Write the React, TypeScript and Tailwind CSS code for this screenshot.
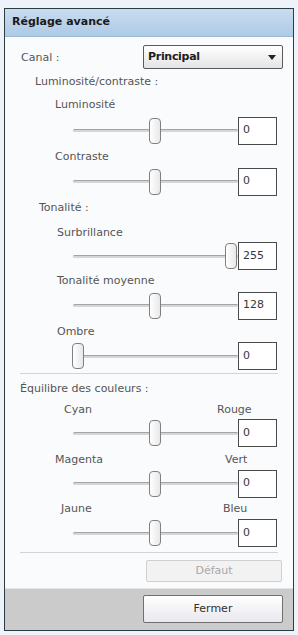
import React from "react";

const font = { fontFamily: '"DejaVu Sans", "Liberation Sans", sans-serif' };

function Label({ h, pl, children }: { h: number; pl: number; children: React.ReactNode }) {
  return (
    <div className="flex items-center text-[11px] text-[#555555]" style={{ height: h, paddingLeft: pl }}>
      <span className="relative top-[2px]">{children}</span>
    </div>
  );
}

function Pair({ h, left, right, lx, rx }: { h: number; left: string; right: string; lx: number; rx: number }) {
  return (
    <div className="relative flex items-center text-[11px] text-[#555555]" style={{ height: h }}>
      <span className="absolute top-[calc(50%-6px)]" style={{ left: lx }}>{left}</span>
      <span className="absolute top-[calc(50%-6px)]" style={{ left: rx }}>{right}</span>
    </div>
  );
}

function Slider({ h, pos, value }: { h: number; pos: number; value: string }) {
  const center = 78 + pos * (231 - 78);
  const left = center - 6 - 73;
  return (
    <div className="flex items-center" style={{ height: h }}>
      <div className="relative top-[1px] flex items-center">
        <div className="ml-[68px] relative w-[165px] h-[28px] flex items-center">
          <div className="w-full h-[3px] rounded-full bg-[#d6d6d6] border-t border-[#a4a4a4]" />
          <div
            className="absolute top-[1px] w-[12px] h-[26px] rounded-[4px] border border-[#808080] bg-gradient-to-r from-[#ffffff] to-[#e8e8e8]"
            style={{ left }}
          />
        </div>
        <div className="w-[39px] h-[28px] border border-[#4a4a4a] bg-white flex items-center pl-[4px] text-[11px] text-[#383838]">
          {value}
        </div>
      </div>
    </div>
  );
}

function Sep({ h }: { h: number }) {
  return (
    <div className="flex items-center px-[15px]" style={{ height: h }}>
      <div className="relative top-[1px] w-full h-px bg-[#d4d4d4]" />
    </div>
  );
}

export default function App() {
  return (
    <div className="w-[298px] h-[635px] bg-[#eef3f9] pt-[8px] pl-[4px]" style={font}>
      <div className="w-[290px] h-[623px] border border-[#2e3c44] bg-[#fafbfd] flex flex-col overflow-hidden">
        <div className="h-[28px] shrink-0 bg-gradient-to-b from-[#c9dcef] to-[#aecae6] border-b border-[#9fb9d4] flex items-center pl-[7px] text-[11px] font-bold text-[#1a1a1a]">
          Réglage avancé
        </div>
        <div className="h-[8px]" />
        <div className="h-[24px] flex items-center">
          <span className="ml-[16px] relative top-[1px] text-[11px] text-[#555555] w-[122px]">Canal :</span>
          <div className="w-[140px] h-[24px] rounded-[2px] border border-[#5a5a5a] bg-gradient-to-b from-[#ffffff] to-[#e4e4e4] flex items-center justify-between px-[4px]">
            <span className="text-[11px] font-bold text-[#202020] tracking-[-0.3px]">Principal</span>
            <svg width="8" height="5" viewBox="0 0 8 5" className="mr-[2px]">
              <path d="M0 0 H8 L4 5 Z" fill="#222" />
            </svg>
          </div>
        </div>
        <Label h={22} pl={30}>Luminosité/contraste :</Label>
        <Label h={25} pl={50}>Luminosité</Label>
        <Slider h={27} pos={0.5} value="0" />
        <Label h={25} pl={50}>Contraste</Label>
        <Slider h={25} pos={0.5} value="0" />
        <Label h={26} pl={34}>Tonalité :</Label>
        <Label h={24} pl={52}>Surbrillance</Label>
        <Slider h={24} pos={1} value="255" />
        <Label h={25} pl={52}>Tonalité moyenne</Label>
        <Slider h={25} pos={0.5} value="128" />
        <Label h={26} pl={52}>Ombre</Label>
        <Slider h={24} pos={0} value="0" />
        <Sep h={10} />
        <Label h={20} pl={15}>Équilibre des couleurs :</Label>
        <Pair h={22} left="Cyan" right="Rouge" lx={59} rx={212} />
        <Slider h={26} pos={0.5} value="0" />
        <Pair h={25} left="Magenta" right="Vert" lx={50} rx={220} />
        <Slider h={25} pos={0.5} value="0" />
        <Pair h={24} left="Jaune" right="Bleu" lx={56} rx={218} />
        <Slider h={26} pos={0.5} value="0" />
        <Sep h={12} />
        <div className="h-[31px] flex items-start pt-[3px]">
          <div className="ml-[141px] w-[136px] h-[22px] border border-[#d0d0d0] rounded-[2px] bg-[#f2f2f2] flex items-center justify-center text-[11px] text-[#a8a8a8]">
            Défaut
          </div>
        </div>
        <div className="flex-1 bg-[#cbcbcb] border-t border-[#e4e4e4] flex items-start pt-[6px]">
          <div className="ml-[138px] w-[140px] h-[28px] border border-[#707070] rounded-[2px] bg-gradient-to-b from-[#ffffff] to-[#e8e8ee] flex items-center justify-center text-[11px] text-[#303030]">
            Fermer
          </div>
        </div>
      </div>
    </div>
  );
}
